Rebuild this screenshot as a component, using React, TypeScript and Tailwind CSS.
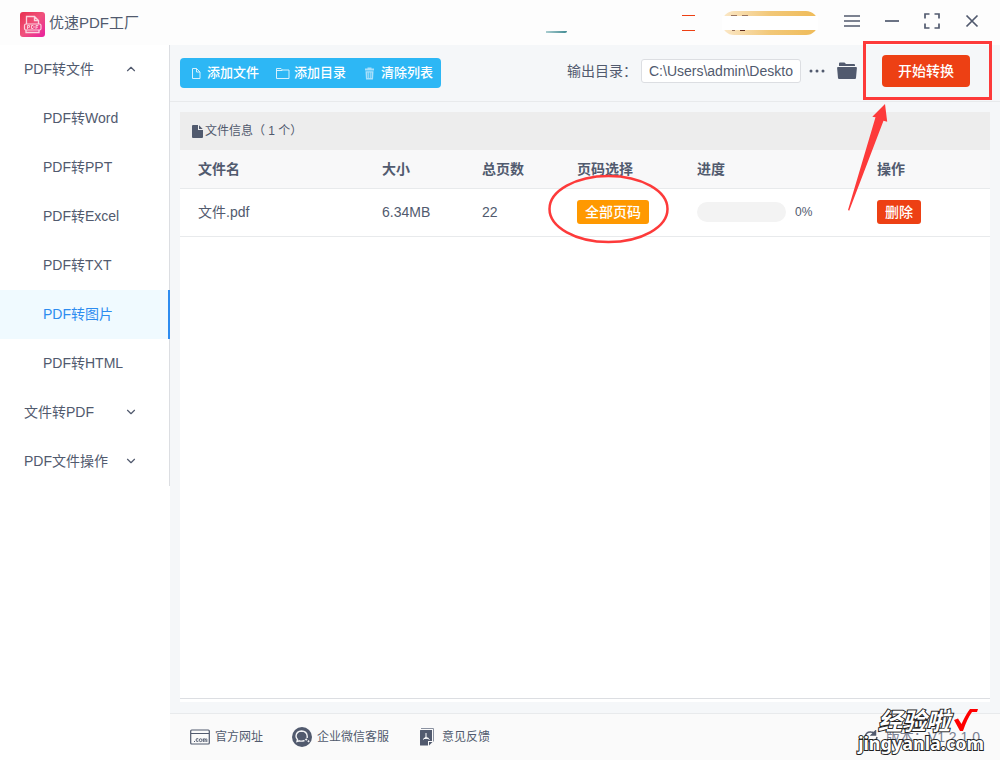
import { useState } from 'react';
import { ChevronDown, ChevronUp } from 'lucide-react';

const MENU = [
  {
    label: 'PDF转文件',
    children: ['PDF转Word', 'PDF转PPT', 'PDF转Excel', 'PDF转TXT', 'PDF转图片', 'PDF转HTML'],
  },
  { label: '文件转PDF', children: [] },
  { label: 'PDF文件操作', children: [] },
];

const FILES = [{ name: '文件.pdf', size: '6.34MB', pages: 22, progress: 0 }];

const WINDOW_BUTTONS = [
  { label: '菜单', path: 'M0 3H16M0 8H16M0 13H16' },
  { label: '最小化', path: 'M1 8H15' },
  { label: '全屏', path: 'M1 5.500V1H5.500M10.500 1H15V5.500M15 10.500V15H10.500M5.500 15H1V10.500' },
  { label: '关闭', path: 'M2.500 2.500L13.500 13.500M13.500 2.500L2.500 13.500' },
];

const Logo = () => (
  <svg width="25" height="25" viewBox="0 0 25 25" fill="none">
    <defs>
      <linearGradient id="logo" x1="0" y1="0" x2="1" y2="1">
        <stop offset="0" stopColor="#e8304f" />
        <stop offset="0.5" stopColor="#f0527c" />
        <stop offset="1" stopColor="#e81fa0" />
      </linearGradient>
    </defs>
    <rect width="25" height="25" rx="3" fill="url(#logo)" />
    <path
      d="M6.500 12V4.500H14.500L18.500 8.500V12M14.500 4.500V8.500H18.500M6 18V20.500H19V18"
      stroke="#fbd3df"
      strokeWidth="1.300"
    />
    <rect x="4.500" y="12" width="16.500" height="6" rx="1.500" stroke="#fbd3df" strokeWidth="1.200" />
    <path
      d="M7.500 17V13.500H9.500V15.300H7.500M11.500 13.500V16.500H13L14 15.500V14.500L13 13.500ZM16 17V13.500H18.300M16 15.200H18"
      stroke="#fbd3df"
      strokeWidth="0.900"
    />
  </svg>
);

const FileOutlineIcon = () => (
  <svg width="15" height="15" viewBox="0 0 15 15" fill="none" stroke="#d5f0fd">
    <path d="M4.500 2.500H8.500L12 6V12.500H4.500ZM8.500 2.500V6H12" />
  </svg>
);

const FolderOutlineIcon = () => (
  <svg width="15" height="15" viewBox="0 0 15 15" fill="none" stroke="#d5f0fd">
    <path d="M1.500 2.500H6L7.500 4H14V12.500H1.500ZM1.500 4.500H7.500" />
  </svg>
);

const TrashIcon = () => (
  <svg width="15" height="15" viewBox="0 0 15 15" fill="#a9e0fb">
    <path d="M5.500 2.500V1.500H9.500V2.500H12V4.500H3V2.500ZM3.500 5.300H11.500L11 13.500H4Z" />
    <path d="M5.800 6.500V12M7.500 6.500V12M9.200 6.500V12" stroke="#2db7f5" strokeWidth="0.700" />
  </svg>
);

const FolderIcon = () => (
  <svg width="20" height="18" viewBox="0 0 20 18" fill="#515a6e">
    <path d="M2 4V1.500Q2 0.500 3 0.500H7.500L9 2H17Q18 2 18 3V4Z" />
    <path d="M1 5H19Q20 5 19.900 6L19 16Q18.900 17 18 17H2Q1.100 17 1 16L0.100 6Q0 5 1 5Z" />
  </svg>
);

const FileSolidIcon = () => (
  <svg width="11" height="13" viewBox="0 0 11 13" fill="#515a6e">
    <path d="M1 0H6V5H11V12Q11 13 10 13H1Q0 13 0 12V1Q0 0 1 0Z" />
    <path d="M7 0.300L10.700 4H7Z" />
  </svg>
);

const SiteIcon = () => (
  <svg width="20" height="20" viewBox="0 0 20 20" fill="none" stroke="#515a6e">
    <rect x="0.700" y="3" width="18.600" height="14" rx="1" strokeWidth="1.200" />
    <path d="M1 6.500H19" />
    <path d="M4 14.500H5M8.300 11.800Q6 11 6 13Q6 15 8.300 14.300M13.300 15V11.500M13.300 12.500Q15 11 15 12.500V15M15 12.500Q16.800 11 16.800 12.500V15" />
    <circle cx="10.600" cy="13.200" r="1.400" />
  </svg>
);

const WechatIcon = () => (
  <svg width="20" height="20" viewBox="0 0 20 20" fill="none">
    <circle cx="10" cy="10" r="10" fill="#515a6e" />
    <path
      d="M12.500 13.500Q10 14.500 7.500 13.800L5 14.500L5.500 12.500Q4 11 4 9Q4.500 4.300 9.500 4Q14.800 4.300 15.200 9V11"
      stroke="#f3f4f6"
      strokeWidth="1.400"
    />
    <path d="M14.200 11.200L15.500 12.500L14.200 13.800L12.900 12.500ZM16.500 13L17.700 14.200L16.500 15.400L15.300 14.200Z" fill="#f3f4f6" />
  </svg>
);

const FeedbackIcon = () => (
  <svg width="16" height="20" viewBox="0 0 16 20" fill="none">
    <path d="M3 1.500H15.500V14.500" stroke="#8b92a1" />
    <path d="M2.500 3H14V14H10V18.500H2.500Q2 18.500 2 18V3.500Q2 3 2.500 3Z" fill="#515a6e" />
    <path d="M11 18.500V15H14.500Z" fill="#515a6e" />
    <path d="M8 6V10L5 12.500M8 10L11.500 12.500M6 11.500L10.500 11.300" stroke="#fff" />
  </svg>
);

const Header = () => (
  <header className="flex h-[45px] shrink-0 items-center justify-between bg-[#fdfdfd] px-5">
    <div className="flex items-center gap-1 pt-1">
      <Logo />
      <h1 className="pb-1 text-[15px] leading-5">优速PDF工厂</h1>
    </div>
    <div className="flex items-center">
      <div className="mr-[115px] flex h-5 w-[21px] items-end">
        <span className="h-[2px] w-full rounded-br bg-linear-to-r from-[#a9cdd0] to-[#3f8b93]" />
      </div>
      <div className="mr-[27px] h-4 w-[13px] border-y border-[#ed4014]" />
      {/* 会员标签 */}
      <div className="relative mr-[26px] h-6 w-24 rounded-full bg-linear-to-r from-[#fbe8c8] via-[#f2c878] to-[#efbb58]">
        <span className="absolute left-[9px] top-1 h-px w-[6px] bg-[#9a7560]" />
        <span className="absolute left-5 top-1 h-px w-[6px] bg-[#9a7560]" />
        <span className="absolute left-[10px] top-[19px] h-px w-[3px] bg-[#9a7560]" />
        <span className="absolute left-[18px] top-[19px] h-px w-[5px] bg-[#5e2c20]" />
        <span className="absolute inset-x-0 top-[5px] h-[14px] bg-white" />
      </div>
      <div className="flex items-center gap-6 pb-[3px]">
        {WINDOW_BUTTONS.map((button) => (
          <button key={button.label} type="button" aria-label={button.label}>
            <svg width="16" height="16" viewBox="0 0 16 16" fill="none" stroke="#515a6e" strokeWidth="1.700">
              <path d={button.path} />
            </svg>
          </button>
        ))}
      </div>
    </div>
  </header>
);

const Sidebar = () => {
  const [active, setActive] = useState('PDF转图片');

  return (
    <aside className="w-[170px] shrink-0 bg-white">
      <nav className="border-r border-[#dcdee2]">
        {MENU.map((group) => (
          <div key={group.label}>
            <button type="button" className="flex h-[49px] w-full items-center justify-between pb-[2px] pl-6 pr-[31px]">
              {group.label}
              {group.children.length > 0 ? <ChevronUp size={14} /> : <ChevronDown size={14} />}
            </button>
            {group.children.map((item) => (
              <button
                key={item}
                type="button"
                onClick={() => setActive(item)}
                className={
                  item === active
                    ? 'relative -mr-px flex h-[49px] w-[170px] items-center border-r-2 border-[#2d8cf0] bg-[#f0faff] pb-[2px] pl-[43px] text-[#2d8cf0]'
                    : 'flex h-[49px] w-full items-center pb-[2px] pl-[43px]'
                }
              >
                {item}
              </button>
            ))}
          </div>
        ))}
      </nav>
    </aside>
  );
};

const Toolbar = () => (
  <div className="flex h-[57px] items-center justify-between border-b border-[#e8eaec] pl-[10px] pr-[30px]">
    <div className="flex h-[30px] rounded bg-[#2db7f5] text-[13px] font-medium text-white">
      <button type="button" className="flex items-center gap-1 px-2">
        <FileOutlineIcon />
        添加文件
      </button>
      <button type="button" className="flex items-center gap-1 px-2">
        <FolderOutlineIcon />
        添加目录
      </button>
      <button type="button" className="flex items-center gap-1 px-2">
        <TrashIcon />
        清除列表
      </button>
    </div>
    <div className="flex items-center pb-1">
      <label htmlFor="output" className="mr-1">
        输出目录：
      </label>
      <input
        id="output"
        type="text"
        defaultValue="C:\Users\admin\Deskto"
        className="h-6 w-40 rounded-[3px] border border-[#dcdee2] bg-white px-[7px] text-[14px]"
      />
      <button type="button" aria-label="更多" className="ml-2 mr-3">
        <svg width="16" height="16" viewBox="0 0 16 16" fill="#515a6e">
          <circle cx="2" cy="8" r="1.500" />
          <circle cx="8" cy="8" r="1.500" />
          <circle cx="14" cy="8" r="1.500" />
        </svg>
      </button>
      <button type="button" aria-label="打开目录" className="mr-[25px]">
        <FolderIcon />
      </button>
      <div className="relative">
        <button type="button" className="h-8 w-[88px] rounded bg-[#ed4014] font-medium text-white">
          开始转换
        </button>
        {/* 标注框和箭头 */}
        <div className="pointer-events-none absolute -bottom-[13px] -left-[19px] -right-[22px] -top-[14px] z-10 border-3 border-[#fd3a3a]" />
        <svg
          className="pointer-events-none absolute -left-[35px] top-[48px] z-10"
          width="44"
          height="110"
          viewBox="0 0 44 110"
          fill="#fd3a3a"
        >
          <path d="M38 1L25.300 13.700L28.500 14.300L1 107L2.200 107.700L36.500 17.700L40.200 18.700Z" />
        </svg>
      </div>
    </div>
  </div>
);

const FileTable = () => (
  <section className="mx-[10px] mb-[11px] mt-[10px] flex flex-1 flex-col bg-white pb-[3px]">
    <h2 className="flex h-[38px] items-center gap-[2px] bg-[#ededed] pl-3 text-[12px]">
      <FileSolidIcon />
      文件信息（ 1 个）
    </h2>
    <div className="flex-1 border-b border-[#dcdee2]">
      <table className="w-full table-fixed text-left">
        <thead>
          <tr className="h-[38px] border-b border-[#e8eaec] bg-[#f8f8f9]">
            <th className="pl-[18px] font-bold">文件名</th>
            <th className="w-[100px] pl-[18px] font-bold">大小</th>
            <th className="w-[95px] pl-[18px] font-bold">总页数</th>
            <th className="w-[120px] pl-[18px] font-bold">页码选择</th>
            <th className="w-[180px] pl-[18px] font-bold">进度</th>
            <th className="w-[131px] pl-[18px] font-bold">操作</th>
          </tr>
        </thead>
        <tbody>
          {FILES.map((file) => (
            <tr key={file.name} className="h-12 border-b border-[#e8eaec]">
              <td className="pl-[18px]">{file.name}</td>
              <td className="pl-[18px]">{file.size}</td>
              <td className="pl-[18px]">{file.pages}</td>
              <td className="pl-[18px]">
                <div className="relative flex">
                  <button type="button" className="h-6 rounded-[3px] bg-[#ff9900] px-2 font-medium text-white">
                    全部页码
                  </button>
                  <svg
                    className="pointer-events-none absolute -left-[29px] -top-[26px] z-10"
                    width="121"
                    height="70"
                    viewBox="0 0 121 70"
                    fill="none"
                  >
                    <ellipse cx="60.500" cy="35" rx="59" ry="33" stroke="#fd3a3a" strokeWidth="2.500" />
                  </svg>
                </div>
              </td>
              <td className="pl-[18px]">
                <div className="flex items-center gap-[9px]">
                  <div className="h-5 w-[89px] overflow-hidden rounded-full bg-[#f3f3f3]">
                    <div className="h-full bg-[#2db7f5]" style={{ width: `${file.progress}%` }} />
                  </div>
                  <span className="text-[12px]">{file.progress}%</span>
                </div>
              </td>
              <td className="pl-[18px]">
                <button type="button" className="block h-6 rounded-[3px] bg-[#ed4014] px-2 font-medium text-white">
                  删除
                </button>
              </td>
            </tr>
          ))}
        </tbody>
      </table>
    </div>
  </section>
);

const Footer = () => (
  <footer className="relative flex h-[47px] items-center justify-between border-t border-[#e8eaec] bg-[#fafafa] px-5 text-[12px]">
    <div className="flex items-center gap-[29px]">
      <a href="#site" className="flex items-center gap-[5px]">
        <SiteIcon />
        官方网址
      </a>
      <a href="#service" className="flex items-center gap-[5px]">
        <WechatIcon />
        企业微信客服
      </a>
      <a href="#feedback" className="flex items-center gap-2">
        <FeedbackIcon />
        意见反馈
      </a>
    </div>
    <div className="flex items-center gap-2 text-[14px] text-[#7a8193]">
      <svg width="14" height="14" viewBox="0 0 14 14" fill="none" stroke="#515a6e" strokeWidth="1.500">
        <path d="M1 7Q2 1.500 7 2Q9.500 2 11 4M13 7Q12 12.500 7 12Q4.500 12 3 10" />
        <path d="M11.500 1V5H7.500Z" fill="#515a6e" />
      </svg>
      版本：V1.2.1.0
    </div>
    {/* 水印 */}
    <div className="pointer-events-none absolute -top-[5px] right-4 z-20 flex flex-col items-end font-['Noto_Sans','Noto_Sans_CJK_SC',sans-serif] font-bold text-white [-webkit-text-stroke:2px_#222] [paint-order:stroke_fill]">
      <div className="flex items-start gap-1 pr-[6px]">
        <span className="text-[24px] italic leading-6">经验啦</span>
        <svg width="24" height="24" viewBox="0 0 24 24" fill="none" stroke="none">
          <path d="M0 11L4 9.500L7.500 15Q12 5 16 0H24L23 3H18Q13 10 9 22H6Z" fill="#f00" />
        </svg>
      </div>
      <span className="text-[18px] leading-5">jingyanla.com</span>
    </div>
  </footer>
);

const App = () => (
  <div className="flex min-h-screen flex-col bg-white font-['Liberation_Sans','Noto_Sans_CJK_SC',sans-serif] text-[14px] leading-5 text-[#515a6e]">
    <Header />
    <div className="flex flex-1">
      <Sidebar />
      <main className="flex min-w-0 flex-1 flex-col bg-[#f5f7f9]">
        <Toolbar />
        <FileTable />
        <Footer />
      </main>
    </div>
  </div>
);

export default App;
